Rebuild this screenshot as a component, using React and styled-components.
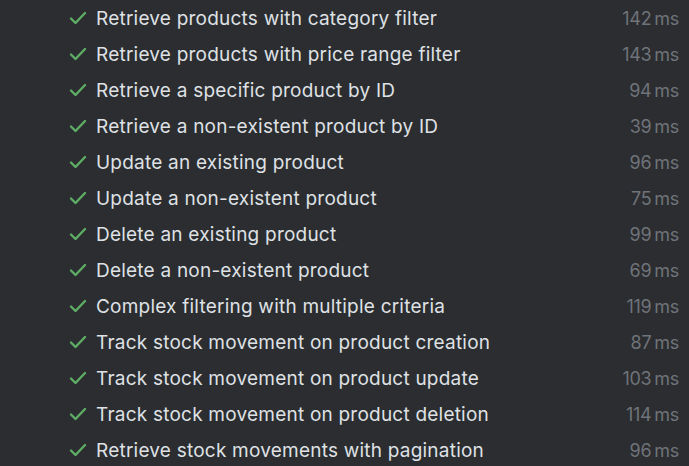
import React from 'react';
import styled, { createGlobalStyle } from 'styled-components';

const GlobalStyle = createGlobalStyle`
  html, body {
    margin: 0;
    padding: 0;
    background: #2b2d30;
  }
`;

const List = styled.ul`
  list-style: none;
  margin: 0;
  padding: 0 10px 0 68px;
  width: 689px;
  height: 466px;
  box-sizing: border-box;
  overflow: hidden;
  font-family: Inter, "Noto Sans", sans-serif;
  background: #2b2d30;
`;

const Row = styled.li`
  display: flex;
  align-items: center;
  height: 36px;
`;

const Check = styled.svg`
  width: 20px;
  height: 20px;
  flex: none;
  margin-right: 8px;
`;

const Name = styled.span`
  flex: 1;
  color: #dfe1e5;
  font-size: 19px;
  letter-spacing: 0.22px;
  white-space: nowrap;
`;

const Time = styled.span`
  color: #6f737a;
  font-size: 18px;
  white-space: nowrap;
  letter-spacing: -0.3px;
`;

const tests = [
  ['Retrieve products with category filter', 142],
  ['Retrieve products with price range filter', 143],
  ['Retrieve a specific product by ID', 94],
  ['Retrieve a non-existent product by ID', 39],
  ['Update an existing product', 96],
  ['Update a non-existent product', 75],
  ['Delete an existing product', 99],
  ['Delete a non-existent product', 69],
  ['Complex filtering with multiple criteria', 119],
  ['Track stock movement on product creation', 87],
  ['Track stock movement on product update', 103],
  ['Track stock movement on product deletion', 114],
  ['Retrieve stock movements with pagination', 96],
];

const App = () => (
  <>
    <GlobalStyle />
    <List>
      {tests.map(([name, ms]) => (
        <Row key={name}>
          <Check viewBox="0 0 20 20">
            <path d="M3 10.5l4.5 4.5L17 5" fill="none" stroke="#5fad65" strokeWidth="2.4" strokeLinecap="round" strokeLinejoin="round" />
          </Check>
          <Name>{name}</Name>
          <Time>{ms}{'\u2009'}ms</Time>
        </Row>
      ))}
    </List>
  </>
);

export default App;
